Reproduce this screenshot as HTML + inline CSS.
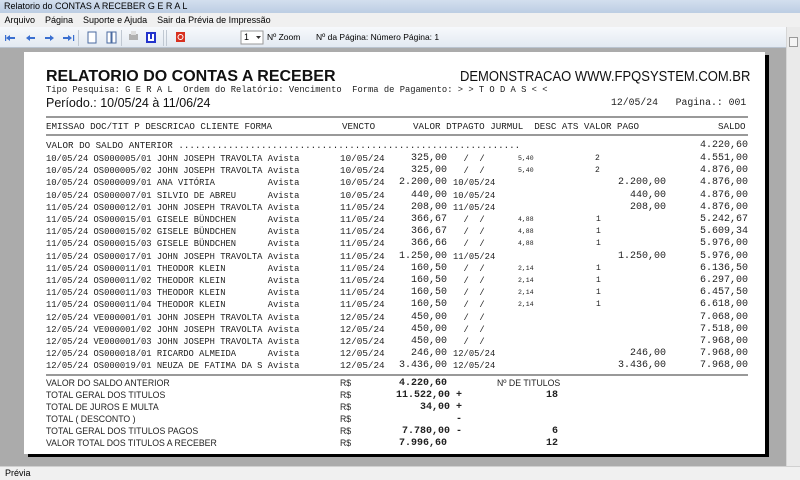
<!DOCTYPE html>
<html><head><meta charset="utf-8"><style>
*{margin:0;padding:0;box-sizing:border-box}
body{width:800px;height:480px;overflow:hidden;background:#ababab;font-family:"Liberation Sans",sans-serif;position:relative}
.ab{position:absolute;white-space:pre}
#title{left:0;top:0;width:800px;height:13px;background:linear-gradient(#d3dfee,#bccde3);font-size:9px;line-height:13px;padding-left:4px;color:#000}
#menu{left:0;top:13px;width:800px;height:14px;background:#f0f0f0;font-size:9px;line-height:14px;color:#000}
#tb{left:0;top:27px;width:800px;height:21px;background:linear-gradient(#f7f9fc,#e3e9f1);border-bottom:1px solid #b9c3cf}
#status{left:0;top:466px;width:800px;height:14px;background:#f0f0f0;border-top:1px solid #d0d0d0;font-size:9px;line-height:13px;padding-left:5px}
#sb{left:786px;top:27px;width:14px;height:439px;background:#eaeaea;border-left:1px solid #d6d6d6}
#page{left:24px;top:52px;width:741px;height:402px;background:#fff;box-shadow:4px 3px 0 #000}
.r{position:absolute;height:12px;line-height:12px;font-size:8.8px;white-space:pre;font-family:"Liberation Mono",monospace;color:#222}
.v{font-size:10px}
.s{font-size:6.5px}
.hl{position:absolute;left:46px;width:702px;height:2px;background:#999}
.lab{position:absolute;left:46px;font-size:9.5px;line-height:12px;color:#222;transform:scaleX(.92);transform-origin:left}
</style></head><body>
<div id="title" class="ab">Relatorio do CONTAS A RECEBER G E R A L</div>
<div id="menu" class="ab">  Arquivo    Página    Suporte e Ajuda    Sair da Prévia de Impressão</div>
<div id="tb" class="ab">
<svg width="800" height="21" style="position:absolute;left:0;top:0">
<g fill="#3a6fd0">
<path d="M6 11 l4 -3 v2 h5 v2 h-5 v2z"/><rect x="5" y="8" width="1.2" height="6"/>
<path d="M26 11 l4 -3 v2 h5 v2 h-5 v2z"/>
<path d="M54 11 l-4 -3 v2 h-5 v2 h5 v2z"/>
<path d="M72 11 l-4 -3 v2 h-5 v2 h5 v2z"/><rect x="73" y="8" width="1.2" height="6"/>
</g>
<rect x="78" y="3" width="1" height="16" fill="#c0c8d2"/>
<rect x="88" y="5" width="8" height="11" fill="#fff" stroke="#4a6aa0"/>
<rect x="107" y="5" width="4" height="11" fill="#fff" stroke="#4a6aa0"/><rect x="112" y="5" width="4" height="11" fill="#fff" stroke="#4a6aa0"/>
<rect x="121" y="3" width="1" height="16" fill="#c0c8d2"/>
<rect x="129" y="7" width="9" height="6" fill="#b0b0b0"/><rect x="131" y="4" width="5" height="4" fill="#ddd"/>
<rect x="146" y="5" width="10" height="11" fill="#2233cc"/><rect x="148" y="7" width="6" height="7" fill="#fff"/><rect x="150" y="7" width="2" height="5" fill="#2233cc"/>
<rect x="163" y="3" width="1" height="16" fill="#c0c8d2"/><rect x="166" y="3" width="1" height="16" fill="#c0c8d2"/>
<rect x="176" y="5" width="9" height="10" fill="#d83020"/><circle cx="180.5" cy="10" r="2.5" fill="none" stroke="#fff"/>
<rect x="241" y="4" width="22" height="13" fill="#fff" stroke="#999"/><path d="M256 9 h5 l-2.5 3z" fill="#333"/>
</svg>
<div class="ab" style="left:244px;top:5px;font-size:9px">1</div>
<div class="ab" style="left:267px;top:5px;font-size:8.5px">Nº Zoom</div>
<div class="ab" style="left:316px;top:5px;font-size:8.5px">Nº da Página: Número Página: 1</div>
</div>
<div id="sb" class="ab"><div style="position:absolute;left:2px;top:10px;width:9px;height:10px;border:1px solid #999;background:#f4f4f4"></div></div>
<div id="page" class="ab"></div>

<div class="ab" style="left:46px;top:68px;font-size:16px;font-weight:bold;color:#111">RELATORIO DO CONTAS A RECEBER</div>
<div class="ab" style="left:460px;top:68px;font-size:13px;color:#111;transform:scaleY(1.1);transform-origin:top">DEMONSTRACAO WWW.FPQSYSTEM.COM.BR</div>
<div class="r" style="left:46px;top:84px">Tipo Pesquisa: G E R A L  Ordem do Relatório: Vencimento  Forma de Pagamento: > > T O D A S < <</div>
<div class="ab" style="left:46px;top:96px;font-size:12.5px;color:#111">Período.: 10/05/24 à 11/06/24</div>
<div class="r" style="left:611px;top:97px;font-size:9.8px">12/05/24   Pagina.: 001</div>
<div class="hl" style="top:116px"></div>
<div class="r" style="left:46px;top:121px;font-size:9.2px">EMISSAO DOC/TIT P DESCRICAO CLIENTE FORMA</div>
<div class="r" style="left:342px;top:121px;font-size:9.2px">VENCTO</div>
<div class="r" style="left:413px;top:121px;font-size:9.2px">VALOR DTPAGTO JURMUL  DESC ATS VALOR PAGO</div>
<div class="r" style="left:718px;top:121px;font-size:9.2px">SALDO</div>
<div class="hl" style="top:134px"></div>
<div class="r" style="left:46px;top:140px;font-size:9.2px">VALOR DO SALDO ANTERIOR ..............................................................</div>
<div class="r v" style="left:700px;top:140px">4.220,60</div>

<div id="rows"></div>
<script>
const D=[
["10/05/24 OS000005/01 JOHN JOSEPH TRAVOLTA Avista","10/05/24","325,00","  /  /","5,40","2","","4.551,00"],
["10/05/24 OS000005/02 JOHN JOSEPH TRAVOLTA Avista","10/05/24","325,00","  /  /","5,40","2","","4.876,00"],
["10/05/24 OS000009/01 ANA VITÓRIA          Avista","10/05/24","2.200,00","10/05/24","","","2.200,00","4.876,00"],
["10/05/24 OS000007/01 SILVIO DE ABREU      Avista","10/05/24","440,00","10/05/24","","","440,00","4.876,00"],
["11/05/24 OS000012/01 JOHN JOSEPH TRAVOLTA Avista","11/05/24","208,00","11/05/24","","","208,00","4.876,00"],
["11/05/24 OS000015/01 GISELE BÜNDCHEN      Avista","11/05/24","366,67","  /  /","4,88","1","","5.242,67"],
["11/05/24 OS000015/02 GISELE BÜNDCHEN      Avista","11/05/24","366,67","  /  /","4,88","1","","5.609,34"],
["11/05/24 OS000015/03 GISELE BÜNDCHEN      Avista","11/05/24","366,66","  /  /","4,88","1","","5.976,00"],
["11/05/24 OS000017/01 JOHN JOSEPH TRAVOLTA Avista","11/05/24","1.250,00","11/05/24","","","1.250,00","5.976,00"],
["11/05/24 OS000011/01 THEODOR KLEIN        Avista","11/05/24","160,50","  /  /","2,14","1","","6.136,50"],
["11/05/24 OS000011/02 THEODOR KLEIN        Avista","11/05/24","160,50","  /  /","2,14","1","","6.297,00"],
["11/05/24 OS000011/03 THEODOR KLEIN        Avista","11/05/24","160,50","  /  /","2,14","1","","6.457,50"],
["11/05/24 OS000011/04 THEODOR KLEIN        Avista","11/05/24","160,50","  /  /","2,14","1","","6.618,00"],
["12/05/24 VE000001/01 JOHN JOSEPH TRAVOLTA Avista","12/05/24","450,00","  /  /","","","","7.068,00"],
["12/05/24 VE000001/02 JOHN JOSEPH TRAVOLTA Avista","12/05/24","450,00","  /  /","","","","7.518,00"],
["12/05/24 VE000001/03 JOHN JOSEPH TRAVOLTA Avista","12/05/24","450,00","  /  /","","","","7.968,00"],
["12/05/24 OS000018/01 RICARDO ALMEIDA      Avista","12/05/24","246,00","12/05/24","","","246,00","7.968,00"],
["12/05/24 OS000019/01 NEUZA DE FATIMA DA S Avista","12/05/24","3.436,00","12/05/24","","","3.436,00","7.968,00"]];
let h="";
D.forEach((d,i)=>{const t=153+i*12.2;
h+=`<div class="r" style="left:46px;top:${t}px">${d[0]}</div>`;
h+=`<div class="r" style="left:340px;top:${t}px;font-size:9.3px">${d[1]}</div>`;
h+=`<div class="r v" style="right:353px;top:${t}px">${d[2]}</div>`;
h+=`<div class="r" style="left:453px;top:${t}px">${d[3]}</div>`;
if(d[4])h+=`<div class="r s" style="left:518px;top:${t}px">${d[4]}</div>`;
if(d[5])h+=`<div class="r s" style="left:${d[5]=="2"?595:596}px;top:${t}px;font-size:8px">${d[5]}</div>`;
if(d[6])h+=`<div class="r v" style="right:134px;top:${t}px">${d[6]}</div>`;
h+=`<div class="r v" style="right:52px;top:${t}px">${d[7]}</div>`;});
document.getElementById("rows").innerHTML=h;
</script>
<div class="hl" style="top:374px"></div>

<div class="lab" style="top:378px">VALOR DO SALDO ANTERIOR</div>
<div class="lab" style="top:390px">TOTAL GERAL DOS TITULOS</div>
<div class="lab" style="top:402px">TOTAL DE JUROS E MULTA</div>
<div class="lab" style="top:414px">TOTAL ( DESCONTO )</div>
<div class="lab" style="top:426px">TOTAL GERAL DOS TITULOS PAGOS</div>
<div class="lab" style="top:438px">VALOR TOTAL DOS TITULOS A RECEBER</div>
<div class="lab" style="left:340px;top:378px">R$</div>
<div class="lab" style="left:340px;top:390px">R$</div>
<div class="lab" style="left:340px;top:402px">R$</div>
<div class="lab" style="left:340px;top:414px">R$</div>
<div class="lab" style="left:340px;top:426px">R$</div>
<div class="lab" style="left:340px;top:438px">R$</div>
<div class="r v" style="right:353px;top:378px;font-weight:bold">4.220,60</div>
<div class="r v" style="right:338px;top:390px;font-weight:bold">11.522,00 +</div>
<div class="r v" style="right:338px;top:402px;font-weight:bold">34,00 +</div>
<div class="r v" style="right:338px;top:414px;font-weight:bold">-</div>
<div class="r v" style="right:338px;top:426px;font-weight:bold">7.780,00 -</div>
<div class="r v" style="right:353px;top:438px;font-weight:bold">7.996,60</div>
<div class="lab" style="left:497px;top:378px">Nº DE TITULOS</div>
<div class="r v" style="right:242px;top:390px;font-weight:bold">18</div>
<div class="r v" style="right:242px;top:426px;font-weight:bold">6</div>
<div class="r v" style="right:242px;top:438px;font-weight:bold">12</div>

<div id="status" class="ab">Prévia</div>
</body></html>
